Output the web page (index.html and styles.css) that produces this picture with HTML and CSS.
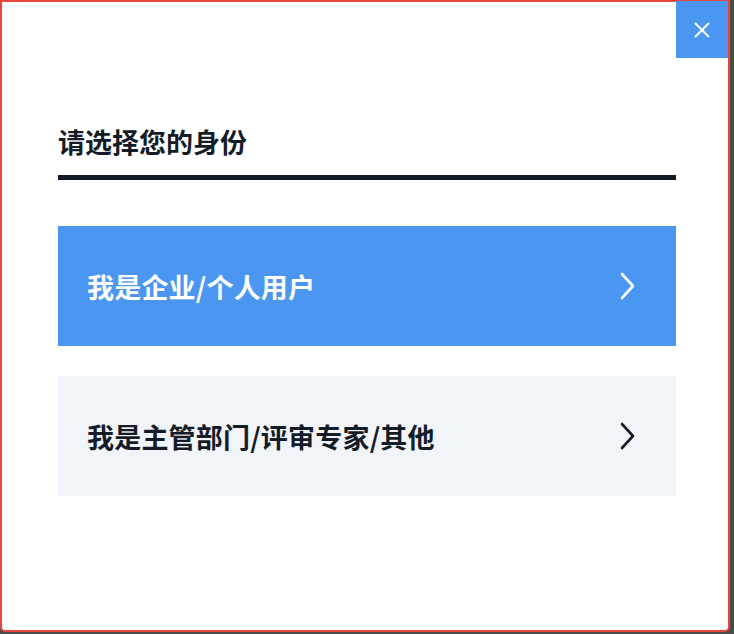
FILE: index.html
```html
<!DOCTYPE html>
<html lang="zh-CN">
<head>
  <meta charset="utf-8" />
  <meta name="viewport" content="width=device-width, initial-scale=1.0" />
  <title>选择身份</title>
  <link rel="stylesheet" href="styles.css">
</head>
<body>

  <div class="dialog">
    <button class="close-btn" aria-label="关闭">
      <svg width="18" height="18" viewBox="0 0 18 18"><path d="M2 2 L16 16 M16 2 L2 16" stroke="#fff" stroke-width="2" fill="none" /></svg>
    </button>

    <h2 class="title">请选择您的身份</h2>

    <div class="choices">
      <a href="#" class="choice active">
        <span>我是企业/个人用户</span>
        <svg class="arrow" width="18" height="30" viewBox="0 0 18 30"><path d="M3 3 L14 15 L3 27" stroke="currentColor" stroke-width="2.6" stroke-linecap="round" stroke-linejoin="round" fill="none" /></svg>
      </a>
      <a href="#" class="choice">
        <span>我是主管部门/评审专家/其他</span>
        <svg class="arrow" width="18" height="30" viewBox="0 0 18 30"><path d="M3 3 L14 15 L3 27" stroke="currentColor" stroke-width="2.6" stroke-linecap="round" stroke-linejoin="round" fill="none" /></svg>
      </a>
    </div>
  </div>

</body>
</html>
```

FILE: styles.css
```css
body {
  margin: 0;
  background: #4a4a4a;
  font-family: "Noto Sans CJK SC", "Noto Sans", sans-serif;
}

.dialog {
  position: relative;
  box-sizing: border-box;
  width: 730px;
  height: 632px;
  background: white;
  border: 2px solid #e8453c;
  border-radius: 0 0 5px 5px;
  padding: 0 52px 0 56px;
}

.close-btn {
  position: absolute;
  top: -1px;
  right: 0;
  width: 52px;
  height: 57px;
  border: none;
  background: #4b96f0;
  display: flex;
  align-items: center;
  justify-content: center;
  cursor: pointer;
  padding: 0;
}

.title {
  margin: 122px 0 0;
  padding-bottom: 15px;
  border-bottom: 5px solid #121b26;
  font-size: 27px;
  line-height: 36px;
  font-weight: bold;
  color: #141c27;
}

.choices {
  display: flex;
  flex-direction: column;
  gap: 30px;
  margin-top: 46px;
}

.choice {
  height: 120px;
  display: flex;
  align-items: center;
  justify-content: space-between;
  padding: 0 39px 0 29px;
  background: #f1f4f8;
  color: #141c27;
  text-decoration: none;
  font-size: 27px;
  letter-spacing: 0.2px;
  font-weight: bold;
}

.choice.active {
  background: #4b96f0;
  color: white;
}
```
